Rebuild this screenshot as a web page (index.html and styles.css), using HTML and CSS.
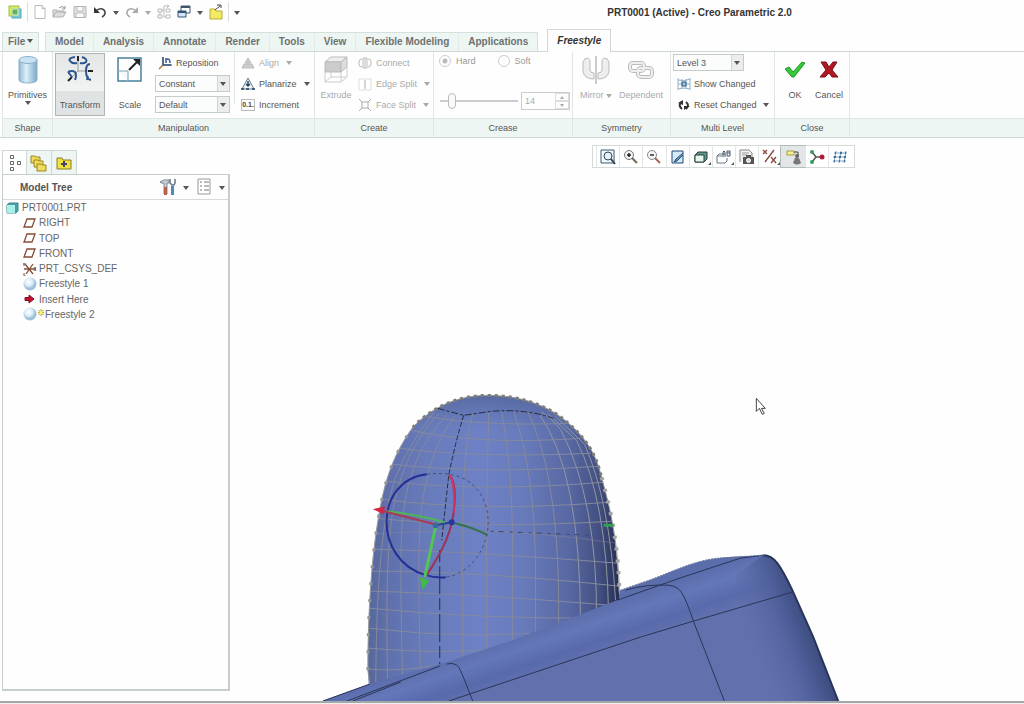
FILE: index.html
```
<!DOCTYPE html>
<html lang="en">
<head>
    <meta charset="UTF-8">
    <meta name="viewport" content="width=device-width, initial-scale=1.0">
    <title>PRT0001 (Active) - Creo Parametric 2.0</title>
    <link rel="stylesheet" href="styles.css">
</head>
<body>
    <header class="titlebar">
        <div class="quick">
            <button class="tool" aria-label="Creo"><svg width="14" height="14" viewBox="0 0 14 14"><rect x="1" y="1" width="10" height="10" fill="#d4e86a" stroke="#9cc83c"/><rect x="4" y="4" width="9" height="9" fill="#79c8dc" stroke="#58a8c0"/><rect x="4" y="4" width="6" height="6" fill="#5cb070" stroke="#e9f5a0"/></svg></button>
            <span class="divider"></span>
            <button class="tool" aria-label="New"><svg width="14" height="16" viewBox="0 0 14 16"><path d="M2 1.500h7l3 3v10H2z M9 1.500v3h3" fill="#fff" stroke="#bbb"/></svg></button>
            <button class="tool" aria-label="Open"><svg width="16" height="14" viewBox="0 0 16 14"><path d="M1 12V5h4l1 1h6v2M1 12l3-5h10l-3 5z" fill="#ddd" stroke="#b0b0b0"/><path d="M7 3q3-3 6 0M13 1v3h-3" fill="none" stroke="#999"/></svg></button>
            <button class="tool" aria-label="Save"><svg width="14" height="14" viewBox="0 0 14 14"><path d="M1 1.500h12v11H1z" fill="#e4e4e4" stroke="#b4b4b4"/><path d="M4 2v4h6V2M3 12V8h8v4" fill="#fafafa" stroke="#bbb"/></svg></button>
            <button class="tool" aria-label="Undo"><svg width="14" height="12" viewBox="0 0 14 12"><path d="M3 5q4-4 8-1 3 4-2 7" fill="none" stroke="#444" stroke-width="1.600"/><path d="M1 1v6h6z" fill="#333"/></svg></button>
            <button class="drop" aria-label="Undo list"><i class="arrow"></i></button>
            <button class="tool" aria-label="Redo"><svg width="14" height="12" viewBox="0 0 14 12"><path d="M11 5Q7 1 3 4q-3 4 2 7" fill="none" stroke="#aaa" stroke-width="1.600"/><path d="M13 1v6H7z" fill="#aaa"/></svg></button>
            <button class="drop" aria-label="Redo list"><i class="arrow dim"></i></button>
            <button class="tool" aria-label="Regenerate"><svg width="14" height="16" viewBox="0 0 14 16"><path d="M1 5h4v3H1zM1 11h4v3H1zM3 8v3" fill="#f4f4f4" stroke="#bbb"/><path d="M5 6h2V2h5M10 1l2 1-2 2M7 6v7h2M9 5h4v3H9zM9 11h4v3H9z" fill="none" stroke="#bbb"/></svg></button>
            <button class="tool" aria-label="Windows"><svg width="14" height="14" viewBox="0 0 14 14"><path d="M4 1h9v7H4z" fill="#fff" stroke="#456"/><path d="M4 2h9" stroke="#456" stroke-width="2"/><path d="M1 6h8v6H1z" fill="#d5e5f5" stroke="#357"/><path d="M1 7h8" stroke="#357" stroke-width="2"/></svg></button>
            <button class="drop" aria-label="Window list"><i class="arrow"></i></button>
            <button class="tool" aria-label="Close"><svg width="14" height="16" viewBox="0 0 14 16"><path d="M1 5h5l1 2h6v8H1z" fill="#f2ea62" stroke="#b8aa38"/><path d="M6 6l5-4M8 1h4v3" fill="none" stroke="#443"/></svg></button>
            <span class="divider"></span>
            <button class="drop" aria-label="Customize"><i class="arrow"></i></button>
        </div>
        <h1>PRT0001 (Active) - Creo Parametric 2.0</h1>
    </header>

    <nav class="tabs">
        <a href="#" class="file">File<i class="arrow"></i></a>
        <div class="tab-strip">
            <a href="#">Model</a>
            <a href="#">Analysis</a>
            <a href="#">Annotate</a>
            <a href="#">Render</a>
            <a href="#">Tools</a>
            <a href="#">View</a>
            <a href="#">Flexible Modeling</a>
            <a href="#">Applications</a>
        </div>
        <a href="#" class="current">Freestyle</a>
    </nav>

    <div class="ribbon">
        <section class="group shape">
            <div class="group-body">
                <button class="big">
                    <svg width="22" height="30" viewBox="0 0 22 30"><defs><linearGradient id="cyl"><stop offset="0" stop-color="#8fb8d4"/><stop offset=".4" stop-color="#dff0fa"/><stop offset="1" stop-color="#7ba9c8"/></linearGradient></defs><path d="M2 5v20c0 4 18 4 18 0V5z" fill="url(#cyl)" stroke="#8bb0c8"/><ellipse cx="11" cy="5" rx="9" ry="3.500" fill="#c9e2f1" stroke="#8bb0c8"/></svg>
                    <span>Primitives</span>
                    <i class="arrow"></i>
                </button>
            </div>
            <h2>Shape</h2>
        </section>

        <section class="group manipulation">
            <div class="group-body">
                <button class="big tall pressed">
                    <svg width="28" height="30" viewBox="0 0 28 30"><path d="M12 1v15h14M12 16l-9 9" fill="none" stroke="#999"/><path d="M12 1v5M22 16h5M6 22l-4 4" stroke="#222" stroke-width="2"/><g fill="none" stroke="#2d5590" stroke-width="2"><path d="M9 2Q2 3 4 6q2 3 7 2M16 2q6 2 4 5-2 2-6 1M24 9q-4 0-4 7 0 8 5 9M22 21l-1 4M2 17q4-2 7 0 2 3 0 8M2 17l4 5"/></g></svg>
                    <span>Transform</span>
                </button>
                <button class="big tall">
                    <svg width="26" height="30" viewBox="0 0 26 30"><path d="M1 3h23v23H1z" fill="#fff" stroke="#47809c" stroke-width="1.500"/><path d="M1 16h10v10" fill="#f4fafc" stroke="#78a0b4"/><path d="M12 15L21 6" fill="none" stroke="#222" stroke-width="2"/><path d="M16 4h7v7z" fill="#222"/></svg>
                    <span>Scale</span>
                </button>
                <div class="rows selects">
                    <button class="row"><svg width="16" height="14" viewBox="0 0 16 14"><path d="M5 1v8h9M5 9l-4 4" fill="none" stroke="#b08030" stroke-width="1.500"/><path d="M5 1v8h8M8 7V2M8 4q4-3 4 3" fill="none" stroke="#355d94" stroke-width="1.500"/></svg>Reposition</button>
                    <span class="combo"><select aria-label="Mode"><option>Constant</option></select></span>
                    <span class="combo"><select aria-label="Orientation"><option>Default</option></select></span>
                </div>
                <div class="rows ruled">
                    <button class="row" disabled><svg width="14" height="14" viewBox="0 0 14 14"><path d="M1 12l2-4h8l2 4zM4 7l3-5 3 5z" fill="#ccc" stroke="#bbb"/></svg>Align <i class="arrow dim"></i></button>
                    <button class="row"><svg width="14" height="14" viewBox="0 0 14 14"><path d="M7 1L1 12h12z" fill="#f4f8fc" stroke="#678"/><path d="M7 4v5M5 7l2 2 2-2M0 12h3M5 12h3M11 12h3" fill="none" stroke="#246" stroke-width="1.500"/></svg>Planarize <i class="arrow"></i></button>
                    <button class="row"><span class="digits">0.1.</span>Increment</button>
                </div>
            </div>
            <h2>Manipulation</h2>
        </section>

        <section class="group create">
            <div class="group-body">
                <button class="big" disabled>
                    <svg width="26" height="30" viewBox="0 0 26 30"><path d="M2 7l6-5h16l-6 5z" fill="#eee" stroke="#bbb"/><path d="M2 7h16v10H2z" fill="#ccc" stroke="#bbb"/><path d="M18 7l6-5v10l-6 5z" fill="#ddd" stroke="#bbb"/><path d="M2 17v10h16V17M18 27l6-5V12M8 12v10h15M8 22l-6 5" fill="none" stroke="#ccc"/></svg>
                    <span>Extrude</span>
                </button>
                <div class="rows">
                    <button class="row" disabled><svg width="14" height="14" viewBox="0 0 14 14"><path d="M4 3q-3 0-3 3v2q0 3 3 3M5 2h4v10H5zM7 2v10M10 3q3 0 3 3v2q0 3-3 3" fill="none" stroke="#bbb"/></svg>Connect</button>
                    <button class="row" disabled><svg width="14" height="14" viewBox="0 0 14 14"><path d="M1 2h12v11H1z" fill="#fff" stroke="#ddd"/><path d="M7 3v9" stroke="#aaa"/></svg>Edge Split <i class="arrow dim"></i></button>
                    <button class="row" disabled><svg width="14" height="14" viewBox="0 0 14 14"><path d="M1 1l3 3M13 1l-3 3M1 13l3-3M13 13l-3-3M4 4h6v6H4z" fill="#fff" stroke="#aaa"/></svg>Face Split <i class="arrow dim"></i></button>
                </div>
            </div>
            <h2>Create</h2>
        </section>

        <section class="group crease">
            <div class="group-body">
                <div class="radios">
                    <label><input type="radio" name="crease" checked disabled>Hard</label>
                    <label><input type="radio" name="crease" disabled>Soft</label>
                </div>
                <div class="amount">
                    <input type="range" min="0" max="100" value="12" aria-label="Crease amount" disabled>
                    <span class="spinner"><input type="text" value="14" aria-label="Crease value" disabled><span class="steps"><button aria-label="More" disabled><i class="arrow dim up"></i></button><button aria-label="Less" disabled><i class="arrow dim"></i></button></span></span>
                </div>
            </div>
            <h2>Crease</h2>
        </section>

        <section class="group symmetry">
            <div class="group-body">
                <button class="big" disabled>
                    <svg width="28" height="30" viewBox="0 0 28 30"><path d="M14 1v28" stroke="#999"/><path d="M12 24Q2 24 1 16V7Q2 3 6 3Q8 4 8 7V15Q8 18 12 18zM16 24Q26 24 27 16V7Q26 3 22 3Q20 4 20 7V15Q20 18 16 18z" fill="#eee" stroke="#bbb"/></svg>
                    <span>Mirror <i class="arrow dim"></i></span>
                </button>
                <button class="big" disabled>
                    <svg width="28" height="30" viewBox="0 0 28 30"><g fill="none" stroke="#bbb" stroke-width="4"><rect x="3" y="8" width="14" height="8" rx="3"/><rect x="11" y="13" width="14" height="9" rx="3"/></g><g fill="none" stroke="#eee" stroke-width="2"><rect x="3" y="8" width="14" height="8" rx="3"/><rect x="11" y="13" width="14" height="9" rx="3"/></g></svg>
                    <span>Dependent</span>
                </button>
            </div>
            <h2>Symmetry</h2>
        </section>

        <section class="group level">
            <div class="group-body">
                <div class="rows">
                    <span class="combo"><select aria-label="Level"><option>Level 3</option></select></span>
                    <button class="row"><svg width="14" height="14" viewBox="0 0 14 14"><path d="M1 1v12M13 1v12M5 2v10M9 2v10M1 3q6 2 12-1M1 7h12M1 12q6-2 12 0" fill="none" stroke="#8fb0cc"/><path d="M5 5h4v4H5z" fill="#9cc4e4" stroke="#357"/></svg>Show Changed</button>
                    <button class="row"><svg width="14" height="14" viewBox="0 0 14 14"><path d="M5 11Q1 8 4 4M9 4q4 3 0 7" fill="none" stroke="#333" stroke-width="2"/><path d="M1 5l5-3v5zM13 8l-6 4V8z" fill="#333"/></svg>Reset Changed <i class="arrow"></i></button>
                </div>
            </div>
            <h2>Multi Level</h2>
        </section>

        <section class="group close">
            <div class="group-body">
                <button class="big">
                    <svg width="24" height="30" viewBox="0 0 24 30"><path d="M2 14l4-2 4 5L19 7l3 1-11 14H9z" fill="#35c83a" stroke="#1d9a25"/></svg>
                    <span>OK</span>
                </button>
                <button class="big">
                    <svg width="24" height="30" viewBox="0 0 24 30"><path d="M4 7h5l3 5 4-5h4l-5 8 6 7h-6l-3-4-4 4H3l6-7z" fill="#b01824" stroke="#7a0f18"/></svg>
                    <span>Cancel</span>
                </button>
            </div>
            <h2>Close</h2>
        </section>
        <div class="group rest"><div class="group-body"></div><h2></h2></div>
    </div>

    <main>
        <aside>
            <nav class="side-tabs">
                <button class="on" aria-label="Model Tree"><svg width="14" height="18" viewBox="0 0 14 18"><path d="M2.500 1.500h3v3h-3zM2.500 7.500h3v3h-3zM2.500 13.500h3v3h-3zM9.500 7.500h3v3h-3z" fill="#fff" stroke="#666"/></svg></button>
                <button aria-label="Folder Browser"><svg width="18" height="18" viewBox="0 0 18 18"><g fill="#f0dc5c" stroke="#9c8420"><path d="M1 2h4l1 1h4v6H1z"/><path d="M4 6h4l1 1h4v6H4z"/><path d="M7 10h4l1 1h4v6H7z"/></g></svg></button>
                <button aria-label="Favorites"><svg width="18" height="16" viewBox="0 0 18 16"><path d="M2 3h5l1 2h8v9H2z" fill="#f0e040" stroke="#8a7a28"/><path d="M9 6v6M6 9h6" stroke="#446" stroke-width="2"/></svg></button>
            </nav>
            <div class="panel">
                <div class="panel-head">
                    <h2>Model Tree</h2>
                    <button class="tool" aria-label="Settings"><svg width="18" height="18" viewBox="0 0 18 18"><path d="M1 4q3-3 9-2v3H8v11H5V5H2z" fill="#c8ced4" stroke="#7d8894"/><path d="M5 9h3v8H5z" fill="#b86050"/><path d="M12 8h3v9h-3z" fill="#4a8cc0"/><path d="M11 1v4l2 2h2l1-2V1" fill="#fff" stroke="#678" stroke-width="1.500"/></svg></button>
                    <button class="drop" aria-label="Settings menu"><i class="arrow"></i></button>
                    <button class="tool" aria-label="Show"><svg width="16" height="18" viewBox="0 0 16 18"><path d="M2 1h12v15H2z" fill="#fff" stroke="#999"/><path d="M4 4h2M4 8h2M4 12h2M8 4h5M8 8h5M8 12h5" stroke="#777"/></svg></button>
                    <button class="drop" aria-label="Show menu"><i class="arrow"></i></button>
                </div>
                <ul class="tree">
                    <li class="root"><svg width="13" height="12" viewBox="0 0 13 12"><path d="M1 3l2-2h9v8l-2 2H1z" fill="#48a0a0" stroke="#3c8890"/><path d="M1 3h8v8H1z" fill="#a8f0ea"/></svg>PRT0001.PRT</li>
                    <li><svg width="14" height="12" viewBox="0 0 14 12"><path d="M4 2h8l-3 8H1z" fill="none" stroke="#854c38" stroke-width="1.300"/></svg>RIGHT</li>
                    <li><svg width="14" height="12" viewBox="0 0 14 12"><path d="M4 2h8l-3 8H1z" fill="none" stroke="#854c38" stroke-width="1.300"/></svg>TOP</li>
                    <li><svg width="14" height="12" viewBox="0 0 14 12"><path d="M4 2h8l-3 8H1z" fill="none" stroke="#854c38" stroke-width="1.300"/></svg>FRONT</li>
                    <li><svg width="14" height="14" viewBox="0 0 14 14"><path d="M1 7h12M2 2l8 10M10 2L3 12" fill="none" stroke="#854c38" stroke-width="1.300"/><path d="M0 2h3M1 1v3M11 5l2 4M13 5l-2 4M1 11v3h2" fill="none" stroke="#765"/></svg>PRT_CSYS_DEF</li>
                    <li><svg width="14" height="14" viewBox="0 0 14 14"><defs><radialGradient id="ball" cx=".4" cy=".35"><stop offset="0" stop-color="#fff"/><stop offset=".6" stop-color="#d9ecf8"/><stop offset="1" stop-color="#9dbfd8"/></radialGradient></defs><circle cx="7" cy="7" r="6.500" fill="url(#ball)"/></svg>Freestyle 1</li>
                    <li><svg width="14" height="12" viewBox="0 0 14 12"><path d="M2 4.500h4V2l5 4-5 4V7.500H2z" fill="#c01030" stroke="#800c20"/></svg>Insert Here</li>
                    <li><svg width="14" height="14" viewBox="0 0 14 14"><circle cx="7" cy="7" r="6.500" fill="url(#ball)"/></svg><svg class="star" width="8" height="12" viewBox="0 0 8 12"><path d="M4 1v7M1 4.500h6M1.500 2l5 5M6.500 2l-5 5" stroke="#a8a020"/><circle cx="4" cy="4.500" r="1.500" fill="#ffff60"/></svg>Freestyle 2</li>
                </ul>
            </div>
        </aside>

        <section class="viewport">
            <svg class="model" viewBox="229 138 795 563" preserveAspectRatio="xMinYMax meet" role="img" aria-label="Part model">
                <defs>
                    <linearGradient id="finger">
                        <stop offset="0" stop-color="#566899"/>
                        <stop offset=".08" stop-color="#5f70ad"/>
                        <stop offset=".24" stop-color="#687bbb"/>
                        <stop offset=".45" stop-color="#6e81c6"/>
                        <stop offset=".62" stop-color="#677aba"/>
                        <stop offset=".8" stop-color="#5868a3"/>
                        <stop offset=".92" stop-color="#434f80"/>
                        <stop offset="1" stop-color="#252e52"/>
                    </linearGradient>
                    <linearGradient id="cap" x1="0" y1="0" x2="0" y2="1">
                        <stop offset="0" stop-color="#4d5f92" stop-opacity=".7"/>
                        <stop offset=".12" stop-color="#6074ae" stop-opacity="0"/>
                    </linearGradient>
                    <linearGradient id="band" gradientUnits="userSpaceOnUse" x1="600" y1="601" x2="616" y2="648">
                        <stop offset="0" stop-color="#596aa8"/>
                        <stop offset=".4" stop-color="#6477b8"/>
                        <stop offset=".75" stop-color="#586aac"/>
                        <stop offset="1" stop-color="#6270ad"/>
                    </linearGradient>
                    <linearGradient id="side" gradientUnits="userSpaceOnUse" x1="755" y1="655" x2="822" y2="630">
                        <stop offset="0" stop-color="#5c6dab" stop-opacity="0"/>
                        <stop offset=".55" stop-color="#4f609b"/>
                        <stop offset="1" stop-color="#354272"/>
                    </linearGradient>
                    <clipPath id="inside"><path d="M369 686L367 670C367 620 370 560 378 515C384 480 392 455 412 427C430 408 455 395 487 395C520 395 548 405 568 423C590 442 597 460 601 477C612 515 618 550 619 600L513 640L440 667z"/></clipPath>
                </defs>
                <path d="M600 605L620 590L643 582C665 575 690 561 717 558C740 555 760 556 763 555L740 575L620 620z" fill="#5c6dab"/>
                <path d="M369 700L367 670C367 620 370 560 378 515C384 480 392 455 412 427C430 408 455 395 487 395C520 395 548 405 568 423C590 442 597 460 601 477C612 515 618 550 619 610L440 700z" fill="url(#finger)"/>
                <path d="M369 700L367 670C367 620 370 560 378 515C384 480 392 455 412 427C430 408 455 395 487 395C520 395 548 405 568 423C590 442 597 460 601 477C612 515 618 550 619 610L440 700z" fill="url(#cap)"/>
                <g clip-path="url(#inside)" fill="none" stroke="#858a9d" stroke-width="1">
                    <path d="M375 690C375 620 378 550 388 500Q398 455 434 411"/>
                    <path d="M387 690C385 600 386 550 392 510Q403 450 438 413"/>
                    <path d="M402 690C400 600 399 550 402 515Q410 450 446 415"/>
                    <path d="M420 690C418 600 417 550 420 515Q427 450 454 416"/>
                    <path d="M462 680V520Q462 450 472 414"/>
                    <path d="M486 680V520Q487 450 488 412"/>
                    <path d="M512 660V550Q512 470 501 411"/>
                    <path d="M535 640V570Q534 470 513 411"/>
                    <path d="M558 640V590Q556 470 527 411"/>
                    <g stroke="#9297a4">
                        <path d="M580 625Q580 470 538 413"/>
                        <path d="M596 620Q597 500 560 429Q550 417 541 412"/>
                        <path d="M608 612Q606 500 576 440L548 414"/>
                        <path d="M615 600Q609 500 584 444L555 416"/>
                    </g>
                    <path d="M425 416Q480 426 570 423"/>
                    <path d="M410 430Q480 445 580 438"/>
                    <path d="M398 448Q480 458 590 453"/>
                    <path d="M392 464Q480 474 598 466"/>
                    <path d="M386 481Q480 492 603 482"/>
                    <path d="M381 499Q480 512 608 502"/>
                    <path d="M376 518Q480 529 612 521"/>
                    <path d="M373 534Q420 530 480 531T616 543" stroke-opacity=".5"/>
                    <path d="M374 549Q480 552 617 563"/>
                    <path d="M370 571Q480 571 618 586"/>
                    <path d="M368 591Q480 594 620 606"/>
                    <path d="M367 608Q480 619 600 618"/>
                    <path d="M367 628Q480 642 590 628"/>
                    <path d="M367 648Q480 658 560 638"/>
                    <path d="M367 669Q420 674 500 650"/>
                </g>
                <path d="M369 684L367 670C367 620 370 560 378 515C384 480 392 455 412 427C430 408 455 395 487 395C520 395 548 405 568 423C590 442 597 460 601 477C612 515 618 550 619 594" fill="none" stroke="#9a9b9a" stroke-width="1"/>
                <path d="M367 670C367 620 370 560 378 515C384 480 392 455 412 427" fill="none" stroke="#96969a" stroke-width="3" stroke-dasharray="3 14"/>
                <path d="M412 427C430 408 455 395 487 395C520 395 548 405 568 423C590 442 597 460 601 477" fill="none" stroke="#7d7d78" stroke-width="3" stroke-dasharray="3 4"/>
                <path d="M601 477C612 515 618 550 619 594" fill="none" stroke="#a5a5a5" stroke-width="4" stroke-dasharray="3 9"/>
                <g fill="none" stroke="#272c40" stroke-width="1">
                    <path d="M437 408L463 415L490 411Q525 408 553 418" stroke-dasharray="7 2 3 2"/>
                    <path d="M463 415Q455 440 448 475L441 540" stroke-dasharray="5 2"/>
                    <path d="M439 550V666" stroke-dasharray="12 4 28 4"/>
                    <path d="M490 531L590 535" stroke-dasharray="3 5 5 6" stroke="#3d4662"/>
                    <path d="M400 530H425" stroke-dasharray="2 5" stroke="#7d7780"/>
                </g>

                <path d="M322 701L369 684L440 664L513 640L617 600L740 558L763 555Q771 555 777 563Q783 571 792 590L813 637L838 701z" fill="#6270ad"/>
                <path d="M322 701L369 684L440 664L513 640L617 600L740 558L763 555Q771 555 777 563Q783 571 792 592L693 621L640 637L448 701z" fill="url(#band)"/>
                <path d="M735 575L763 555Q771 555 777 563Q783 571 792 590L813 637L838 701H755z" fill="url(#side)"/>
                <g fill="none" stroke="#293557" stroke-width="1">
                    <path d="M448 701L640 637L693 621L792 592"/>
                    <path d="M625 590Q645 584 668 585Q677 586 681 592Q686 600 693 621L724 701"/>
                    <path d="M617 600Q680 577 740 558L763 555"/>
                    <path d="M322 701L369 684M346 701L439 666M352 701L400 682"/>
                    <path d="M446 664Q454 662 458 667Q461 672 472 701"/>
                    <path d="M763 555Q771 555 777 563Q783 571 792 590L813 637L838 701" stroke-width="2"/>
                    <path d="M620 590L643 582C665 575 690 561 717 558L763 555" stroke="#68749c" stroke-dasharray="2 1"/>
                </g>

                <!-- drag handles of the transform -->
                <g fill="none" stroke-width="2">
                    <path d="M426 474C373 480 372 560 425 575Q435 578 445 577" stroke="#252f96"/>
                    <path d="M426 474C470 468 485 495 487 515C491 545 470 574 445 577" stroke="#465072" stroke-width="1" stroke-dasharray="3 3"/>
                    <path d="M448 475Q455 480 454 500C453 530 442 550 426 575" stroke="#9e3158"/>
                    <path d="M449 475Q455 484 453 513" stroke="#cc3468"/>
                    <path d="M386 511Q415 514 444 522" stroke="#50b458"/>
                    <path d="M454 523Q472 527 487 535" stroke="#32744c"/>
                    <path d="M435 526L424 577" stroke="#55c552" stroke-width="3"/>
                    <path d="M383 511L434 524" stroke="#a93a55"/>
                    <path d="M435 525L451 522" stroke="#274586"/>
                    <path d="M603 525h10" stroke="#30a050" stroke-width="3"/>
                </g>
                <path d="M372 509L384 506L383 514z" fill="#d12845"/>
                <path d="M419 577L428 580L422 590z" fill="#3ebc40"/>
                <circle cx="435" cy="525" r="3" fill="#386a9c"/>
                <circle cx="451" cy="522" r="3" fill="#26369c"/>
                <path d="M756 398v13l3-3 3 6 2-1-3-5h4z" fill="#fff" stroke="#444"/>
            </svg>

            <div class="view-tools">
                <button aria-label="Refit"><svg viewBox="0 0 16 16"><path d="M1 1h13v13H1z" fill="#f4f8fc" stroke="#345a78"/><circle cx="8" cy="7" r="4" fill="#e4f0f8" stroke="#345"/><path d="M11 10l4 5" stroke="#345" stroke-width="2"/></svg></button>
                <button aria-label="Zoom In"><svg viewBox="0 0 16 16"><circle cx="6" cy="6" r="4.500" fill="#f4f4f4" stroke="#777"/><path d="M4 6h4M6 4v4" stroke="#222" stroke-width="1.500"/><path d="M9 9l5 5" stroke="#765" stroke-width="2"/></svg></button>
                <button aria-label="Zoom Out"><svg viewBox="0 0 16 16"><circle cx="6" cy="6" r="4.500" fill="#f4f4f4" stroke="#888"/><path d="M4 6h4" stroke="#333" stroke-width="1.500"/><path d="M9 9l5 5" stroke="#a65" stroke-width="2"/></svg></button>
                <button aria-label="Repaint"><svg viewBox="0 0 16 16"><path d="M2 2h11v12H2z" fill="#d5e8f8" stroke="#234a70"/><path d="M13 6L7 12l-3 1 2-3 7-6" fill="#5b8cb8" stroke="#357"/></svg></button>
                <button class="more" aria-label="Display Style"><svg viewBox="0 0 16 16"><path d="M2 6l3-3h9v7l-3 3H2z" fill="#5f9488" stroke="#243f3a"/><path d="M2 6h9v7H2z" fill="#e8f6f0" stroke="#243f3a"/></svg></button>
                <button class="more" aria-label="Saved Orientations"><svg viewBox="0 0 16 16"><path d="M1 7l2-2h4M1 7v7h8l2-2V9M1 7h5" fill="none" stroke="#678"/><path d="M7 8V3l1-1 1 1v5M7 5h2M11 2v5h3V2zM11 4h3" fill="none" stroke="#456"/></svg></button>
                <button aria-label="View Manager"><svg viewBox="0 0 16 16"><path d="M1 13V1h9l3 3v4" fill="#f0f4f4" stroke="#888"/><path d="M3 4h7M3 6h5" stroke="#999"/><rect x="4" y="8" width="11" height="7" fill="#555"/><path d="M7 7h5" stroke="#555" stroke-width="2"/><circle cx="9.500" cy="11.500" r="2" fill="#ddd" stroke="#fff"/></svg></button>
                <button class="more" aria-label="Datum Display"><svg viewBox="0 0 16 16"><path d="M1 1l4 4M5 1L1 5M9 8l5 6M14 8l-5 6M12 1L3 13" fill="none" stroke="#87483c" stroke-width="1.300"/></svg></button>
                <button class="active" aria-label="Annotation Display"><svg viewBox="0 0 16 16"><path d="M1 2h7v4H1z" fill="#f8f090" stroke="#a89a40"/><path d="M8 3h4v5" fill="none" stroke="#444"/><circle cx="11" cy="7" r="2" fill="#666"/><path d="M9 9h4l2 5q-4 3-8 0z" fill="#777"/></svg></button>
                <button aria-label="Spin Center"><svg viewBox="0 0 16 16"><path d="M3 3l4 5h6M7 8l-4 5" fill="none" stroke="#555" stroke-width="1.500"/><circle cx="3" cy="3" r="2" fill="#309c60"/><circle cx="3" cy="13" r="2" fill="#309c60"/><circle cx="13" cy="8" r="2.500" fill="#b01c38"/></svg></button>
                <button aria-label="Mesh Display"><svg viewBox="0 0 16 16"><path d="M4 2L2 14M9 2L7 14M14 2l-2 12M2 4h13M1 8h13M1 12h13" fill="none" stroke="#7ba3c6"/><path d="M3 4h1M8 4h2M13 4h1M2 8h2M7 8h2M12 8h2M2 12h1M7 12h1M12 12h1" stroke="#3f6f9c" stroke-width="2"/></svg></button>
            </div>
        </section>
    </main>
    <footer></footer>
</body>
</html>
```
FILE: styles.css
```
* {
    box-sizing: border-box;
}

body {
    margin: 0;
    min-height: 100vh;
    display: flex;
    flex-direction: column;
    background-color: #fefefe;
    color: #555;
    font-family: "Liberation Sans", Arial, sans-serif;
    font-size: 9px;
}

h1, h2, ul {
    margin: 0;
    padding: 0;
}

button {
    padding: 0;
    border: 0;
    background: none;
    color: inherit;
    font: inherit;
}

button:disabled {
    color: #aaa;
}

svg {
    display: block;
    flex: none;
}

.arrow {
    display: inline-block;
    border: 3px solid transparent;
    border-top: 4px solid #555;
    border-bottom: 0;
}

.arrow.dim {
    border-top-color: #aaa;
}

.arrow.up {
    transform: rotate(180deg);
}

/* title bar */
.titlebar {
    display: flex;
    align-items: center;
    height: 24px;
    margin-bottom: 5px;
}

.quick {
    display: flex;
    align-items: center;
    padding-left: 5px;
}

.tool {
    display: flex;
    align-items: center;
    justify-content: center;
    width: 20px;
    height: 20px;
}

.drop {
    width: 12px;
    height: 20px;
}

.divider {
    width: 1px;
    height: 20px;
    margin: 0 2px;
    background-color: #ddd;
}

.titlebar h1 {
    flex: 1;
    padding-left: 132px;
    text-align: center;
    color: #333;
    font-size: 10px;
}

/* ribbon tabs */
.tabs {
    display: flex;
    align-items: flex-end;
    height: 23px;
    padding-left: 2px;
    border-bottom: 1px solid #d0d8d6;
}

.tabs a {
    color: #6d7170;
    font-size: 10px;
    font-weight: bold;
    line-height: 18px;
    text-decoration: none;
}

.tabs .file {
    width: 37px;
    padding-left: 5px;
    background-color: #eef6f3;
    border: 1px solid #d5dfdc;
    border-bottom: 0;
}

.file .arrow {
    margin: 0 0 2px 2px;
}

.tab-strip {
    display: flex;
    margin: 0 9px 0 6px;
    background-color: #eef6f3;
    border: 1px solid #d5dfdc;
    border-bottom: 0;
}

.tab-strip a {
    padding: 0 9px;
    border-right: 1px solid #e2e9e7;
}

.tab-strip a:last-child {
    border-right: 0;
}

.tabs .current {
    margin-bottom: -1px;
    padding: 0 9px;
    background-color: #fefefe;
    border: 1px solid #d0d8d6;
    border-bottom: 0;
    color: #333;
    font-style: italic;
    line-height: 22px;
}

/* ribbon */
.ribbon {
    display: flex;
    padding-left: 2px;
    border-bottom: 1px solid #d0d8d6;
}

.group {
    display: flex;
    flex-direction: column;
    flex: none;
    border-right: 1px solid #e0e6e4;
}

.group-body {
    display: flex;
    height: 66px;
}

.group h2 {
    height: 19px;
    background-color: #eef6f3;
    border-top: 1px solid #dfe6e4;
    color: #555;
    font-size: 9px;
    font-weight: normal;
    line-height: 18px;
    text-align: center;
}

.shape { width: 51px; border-left: 1px solid #e0e6e4; }
.manipulation { width: 262px; }
.create { width: 119px; }
.crease { width: 139px; }
.symmetry { width: 98px; }
.level { width: 104px; }
.close { width: 75px; }

.rest {
    flex: 1;
    border-right: 0;
}

.big {
    display: flex;
    flex-direction: column;
    align-items: center;
    min-width: 34px;
    padding-top: 3px;
    line-height: 12px;
}

.big svg {
    margin-bottom: 4px;
}

.big.tall {
    width: 50px;
    height: 63px;
    margin-top: 1px;
    padding-top: 2px;
}

.big.tall svg {
    margin-bottom: 14px;
}

.shape .big {
    width: 50px;
}

.pressed {
    margin-left: 2px;
    background-image: linear-gradient(#e4e6e6, #f2f4f4 60%, #dfe3e3 61%);
    outline: 1px solid #b0b6b6;
    outline-offset: -1px;
}

.rows {
    display: grid;
    grid-template-rows: repeat(3, 21px);
    align-content: start;
    align-items: center;
    justify-items: start;
}

.row {
    display: flex;
    align-items: center;
    gap: 4px;
    white-space: nowrap;
}

.row .arrow {
    margin-left: 3px;
}

.selects {
    width: 77px;
}

.selects .row {
    gap: 2px;
    margin-left: 3px;
}

.ruled {
    margin-left: 2px;
    padding-left: 7px;
    background: linear-gradient(#e2e6e6, #e2e6e6) no-repeat 0 0 / 1px 52px;
}

.digits {
    width: 14px;
    overflow: hidden;
    border: 1px solid #bbb;
    font-size: 7px;
    font-weight: bold;
    line-height: 10px;
    color: #444;
}

.combo {
    position: relative;
    width: 75px;
    height: 17px;
}

.combo select {
    width: 100%;
    height: 100%;
    padding: 0 3px;
    appearance: none;
    background: linear-gradient(90deg, #fbfcfc 61px, #d0d4d4 61px, #d0d4d4 62px, #eceeee 62px);
    border: 1px solid #c6cccc;
    border-radius: 0;
    color: #555;
    font: inherit;
}

.combo::after {
    content: "";
    position: absolute;
    top: 7px;
    right: 4px;
    border: 3px solid transparent;
    border-top: 4px solid #555;
    border-bottom: 0;
}

.create .big {
    margin: 0 5px 0 4px;
}

.radios {
    display: flex;
    gap: 22px;
    height: 18px;
    padding-left: 5px;
}

.radios label {
    display: flex;
    align-items: center;
    gap: 5px;
    color: #999;
}

.radios input {
    appearance: none;
    width: 12px;
    height: 12px;
    margin: 0;
    border: 1px solid #ccc;
    border-radius: 50%;
}

.radios input:checked {
    background: radial-gradient(circle, #bbb 2px, #fff 3px);
}

.crease .group-body {
    flex-direction: column;
    gap: 22px;
}

.amount {
    display: flex;
    align-items: center;
    gap: 3px;
    padding: 0 2px 0 6px;
}

.amount input[type="range"] {
    appearance: none;
    flex: 1;
    min-width: 0;
    height: 18px;
    margin: 0;
    background: linear-gradient(#ccc, #ccc) no-repeat center / 100% 2px;
}

.amount input::-webkit-slider-thumb {
    appearance: none;
    width: 8px;
    height: 16px;
    background-color: #fafafa;
    border: 1px solid #bbb;
    border-radius: 4px;
}

.spinner {
    display: flex;
    width: 49px;
    height: 18px;
    border: 1px solid #ccc;
}

.spinner input {
    flex: 1;
    min-width: 0;
    padding: 0 3px;
    border: 0;
    background: none;
    color: #aaa;
    font: inherit;
}

.steps {
    display: flex;
    flex-direction: column;
}

.steps button {
    display: flex;
    flex: 1;
    align-items: center;
    justify-content: center;
    width: 14px;
    border: 1px solid #ddd;
}

.steps .arrow {
    border-width: 3px 2px 0;
}

.symmetry .group-body {
    gap: 6px;
    padding-left: 6px;
}

.level .rows {
    padding-left: 2px;
}

.level .row {
    gap: 3px;
    margin-left: 4px;
}

.level .combo {
    width: 71px;
}

.level .combo select {
    background: linear-gradient(90deg, #fbfcfc 57px, #d0d4d4 57px, #d0d4d4 58px, #eceeee 58px);
}

.close .group-body {
    padding-left: 3px;
}

/* model tree */
main {
    display: flex;
    flex: 1;
}

aside {
    display: flex;
    flex-direction: column;
    width: 228px;
    margin: 12px 0 10px 2px;
}

.side-tabs {
    display: flex;
    height: 24px;
}

.side-tabs button {
    display: flex;
    align-items: center;
    justify-content: center;
    width: 25px;
    background-color: #eef6f3;
    border: 1px solid #d0d8d6;
    border-width: 1px 1px 0 0;
}

.side-tabs .on {
    background-color: #fefefe;
    border-left-width: 1px;
}

.panel {
    flex: 1;
    border: 1px solid #c6cecc;
    border-width: 1px 2px 2px 1px;
}

.panel-head {
    display: flex;
    align-items: center;
    gap: 2px;
    height: 25px;
    padding-left: 17px;
    border-bottom: 1px solid #d5dbd9;
}

.panel-head h2 {
    flex: 1;
    font-size: 10px;
}

.tree {
    display: grid;
    grid-auto-rows: 1fr;
    height: 122px;
    color: #666;
    font-size: 10px;
    list-style: none;
}

.tree li {
    display: flex;
    align-items: center;
    gap: 2px;
    padding-left: 20px;
}

.tree .root {
    gap: 3px;
    padding-left: 3px;
}

.star {
    margin: 0 -2px;
}

/* drawing area */
.viewport {
    position: relative;
    flex: 1;
    min-width: 0;
}

.model {
    width: 100%;
    height: 100%;
}

.view-tools {
    position: absolute;
    top: 7px;
    right: 169px;
    display: grid;
    grid-template-columns: repeat(11, 1fr);
    width: 263px;
    height: 23px;
    padding: 0 3px;
    background-color: #fff;
    border: 1px solid #d5dbd9;
}

.view-tools button {
    position: relative;
    display: flex;
    align-items: center;
    justify-content: center;
    border-left: 1px solid #e2e6e6;
}

.view-tools svg {
    width: 16px;
    height: 16px;
}

.view-tools .active {
    background-color: #e2e6e6;
    outline: 1px solid #b5bcbc;
}

.view-tools .more::after {
    content: "";
    position: absolute;
    right: 1px;
    bottom: 2px;
    border-left: 3px solid transparent;
    border-bottom: 3px solid #555;
}

footer {
    height: 3px;
    background-color: #f0f0f0;
    border-top: 2px solid #a5a8a8;
}
```
